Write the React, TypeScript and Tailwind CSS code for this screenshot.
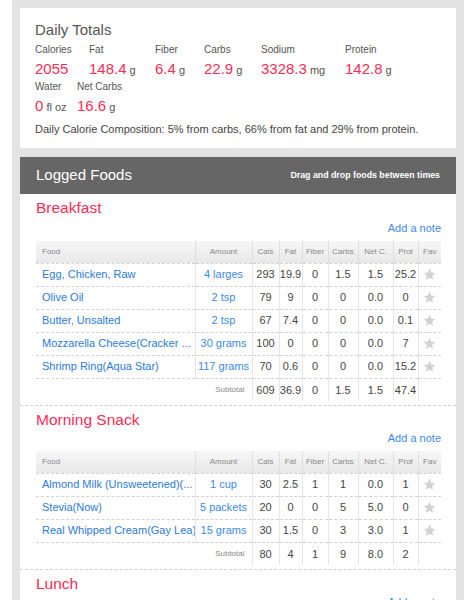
import React from "react"

interface Food {
  name: string
  amount: string
  cals: string
  fat: string
  fiber: string
  carbs: string
  net: string
  prot: string
}

interface Meal {
  title: string
  foods: Food[]
  subtotal: string[]
}

const meals: Meal[] = [
  {
    title: "Breakfast",
    foods: [
      { name: "Egg, Chicken, Raw", amount: "4 larges", cals: "293", fat: "19.9", fiber: "0", carbs: "1.5", net: "1.5", prot: "25.2" },
      { name: "Olive Oil", amount: "2 tsp", cals: "79", fat: "9", fiber: "0", carbs: "0", net: "0.0", prot: "0" },
      { name: "Butter, Unsalted", amount: "2 tsp", cals: "67", fat: "7.4", fiber: "0", carbs: "0", net: "0.0", prot: "0.1" },
      { name: "Mozzarella Cheese(Cracker ...", amount: "30 grams", cals: "100", fat: "0", fiber: "0", carbs: "0", net: "0.0", prot: "7" },
      { name: "Shrimp Ring(Aqua Star)", amount: "117 grams", cals: "70", fat: "0.6", fiber: "0", carbs: "0", net: "0.0", prot: "15.2" },
    ],
    subtotal: ["609", "36.9", "0", "1.5", "1.5", "47.4"],
  },
  {
    title: "Morning Snack",
    foods: [
      { name: "Almond Milk (Unsweetened)(...", amount: "1 cup", cals: "30", fat: "2.5", fiber: "1", carbs: "1", net: "0.0", prot: "1" },
      { name: "Stevia(Now)", amount: "5 packets", cals: "20", fat: "0", fiber: "0", carbs: "5", net: "5.0", prot: "0" },
      { name: "Real Whipped Cream(Gay Lea)", amount: "15 grams", cals: "30", fat: "1.5", fiber: "0", carbs: "3", net: "3.0", prot: "1" },
    ],
    subtotal: ["80", "4", "1", "9", "8.0", "2"],
  },
]

const totalsTop = [
  { label: "Calories", value: "2055", unit: "", w: "w-[54px]" },
  { label: "Fat", value: "148.4", unit: "g", w: "w-[66px]" },
  { label: "Fiber", value: "6.4", unit: "g", w: "w-[49px]" },
  { label: "Carbs", value: "22.9", unit: "g", w: "w-[57px]" },
  { label: "Sodium", value: "3328.3", unit: "mg", w: "w-[84px]" },
  { label: "Protein", value: "142.8", unit: "g", w: "" },
]

const totalsBottom = [
  { label: "Water", value: "0", unit: "fl oz", w: "w-[42px]" },
  { label: "Net Carbs", value: "16.6", unit: "g", w: "" },
]

function Total({ label, value, unit, w }: { label: string; value: string; unit: string; w: string }) {
  return (
    <div className={`flex shrink-0 flex-col ${w}`}>
      <div className="text-[10px] leading-[12px] text-[#555]">{label}</div>
      <div className="mt-[4px] leading-[18px] whitespace-nowrap">
        <span className="text-[15px] text-[#ff2b56]">{value}</span>
        {unit && <span className="text-[11px] text-[#555]"> {unit}</span>}
      </div>
    </div>
  )
}

function StarIcon() {
  return (
    <svg width="13" height="13" viewBox="0 0 24 24" className="mx-auto block">
      <polygon
        points="12,1.5 15.1,8.3 22.5,9.1 17,14.1 18.5,21.5 12,17.8 5.5,21.5 7,14.1 1.5,9.1 8.9,8.3"
        fill="#d2d2d2"
      />
    </svg>
  )
}

const rowLine = "border-b border-b-[#d2d2d2] [border-bottom-style:dashed]"
const th = `h-[22px] p-0 text-[8px] font-normal text-[#888] ${rowLine}`
const thLine = "border-l border-l-[#dedede]"
const cell = `h-[23px] p-0 text-[11px] ${rowLine}`
const vLine = "border-l border-l-[#e6e6e6]"
const num = `${cell} ${vLine} text-center text-[#444]`

function MealSection({ meal, first }: { meal: Meal; first: boolean }) {
  return (
    <div
      className={`pl-4 pr-[15px] pt-[5px] pb-[4px] ${
        first ? "" : "border-t border-dashed border-[#cfcfcf]"
      }`}
    >
      <div className="text-[15.5px] leading-[18px] text-[#ff2b56]">{meal.title}</div>
      <div
        className={`${first ? "mt-[5px]" : "mt-[3px]"} text-right text-[11px] leading-[13px] text-[#3d8ae8]`}
      >
        Add a note
      </div>
      <table className="mt-[6px] w-[405px] table-fixed border-collapse">
        <colgroup>
          <col className="w-[159px]" />
          <col className="w-[57px]" />
          <col className="w-[27px]" />
          <col className="w-[23px]" />
          <col className="w-[26px]" />
          <col className="w-[30px]" />
          <col className="w-[35px]" />
          <col className="w-[25px]" />
          <col className="w-[23px]" />
        </colgroup>
        <thead>
          <tr className="bg-gradient-to-b from-[#f7f7f7] to-[#e8e8e8]">
            <th className={`${th} text-left pl-[6px]`}>Food</th>
            {["Amount", "Cals", "Fat", "Fiber", "Carbs", "Net C.", "Prot", "Fav"].map((h) => (
              <th key={h} className={`${th} ${thLine} text-center`}>
                {h}
              </th>
            ))}
          </tr>
        </thead>
        <tbody>
          {meal.foods.map((f) => (
            <tr key={f.name}>
              <td className={`${cell} overflow-hidden whitespace-nowrap pl-[6px] text-left text-[#2b7bd8]`}>{f.name}</td>
              <td className={`${cell} ${vLine} whitespace-nowrap text-center text-[#3d8ae8]`}>{f.amount}</td>
              <td className={num}>{f.cals}</td>
              <td className={num}>{f.fat}</td>
              <td className={num}>{f.fiber}</td>
              <td className={num}>{f.carbs}</td>
              <td className={num}>{f.net}</td>
              <td className={num}>{f.prot}</td>
              <td className={num}>
                <StarIcon />
              </td>
            </tr>
          ))}
          <tr>
            <td colSpan={2} className="h-[23px] p-0 pr-[7px] text-right text-[8px] text-[#888]">
              Subtotal
            </td>
            {meal.subtotal.map((v, i) => (
              <td key={i} className={`h-[23px] p-0 text-center text-[11px] text-[#444] ${vLine}`}>
                {v}
              </td>
            ))}
            <td className={`h-[23px] p-0 ${vLine}`} />
          </tr>
        </tbody>
      </table>
    </div>
  )
}

export default function App() {
  return (
    <div className="min-h-[600px] bg-white pl-3 pr-[10px] font-['Liberation_Sans',Arial,sans-serif]">
      <div className="bg-[#e2e3e2] px-2 pt-2">
        {/* Daily Totals */}
        <div className="bg-white pl-[15px] pr-4 pt-[13px] pb-[12px]">
          <h2 className="text-[15px] leading-[18px] text-[#555]">Daily Totals</h2>
          <div className="mt-[5px] flex">
            {totalsTop.map((t) => (
              <Total key={t.label} {...t} />
            ))}
          </div>
          <div className="mt-[2px] flex">
            {totalsBottom.map((t) => (
              <Total key={t.label} {...t} />
            ))}
          </div>
          <p className="mt-[7px] text-[11px] leading-[13px] text-[#444]">
            Daily Calorie Composition: 5% from carbs, 66% from fat and 29% from protein.
          </p>
        </div>

        {/* Logged Foods */}
        <div className="mt-[9px] bg-white">
          <div className="flex h-[37px] items-center justify-between bg-[#666] px-4">
            <span className="text-[15px] text-white">Logged Foods</span>
            <span className="text-[8.8px] font-bold text-white">Drag and drop foods between times</span>
          </div>
          {meals.map((m, i) => (
            <MealSection key={m.title} meal={m} first={i === 0} />
          ))}
          <div className="border-t border-dashed border-[#cfcfcf] pl-4 pr-[15px] pt-[5px]">
            <div className="text-[15.5px] leading-[18px] text-[#ff2b56]">Lunch</div>
            <div className="mt-[3px] text-right text-[11px] leading-[13px] text-[#3d8ae8]">Add a note</div>
          </div>
        </div>
      </div>
    </div>
  )
}
